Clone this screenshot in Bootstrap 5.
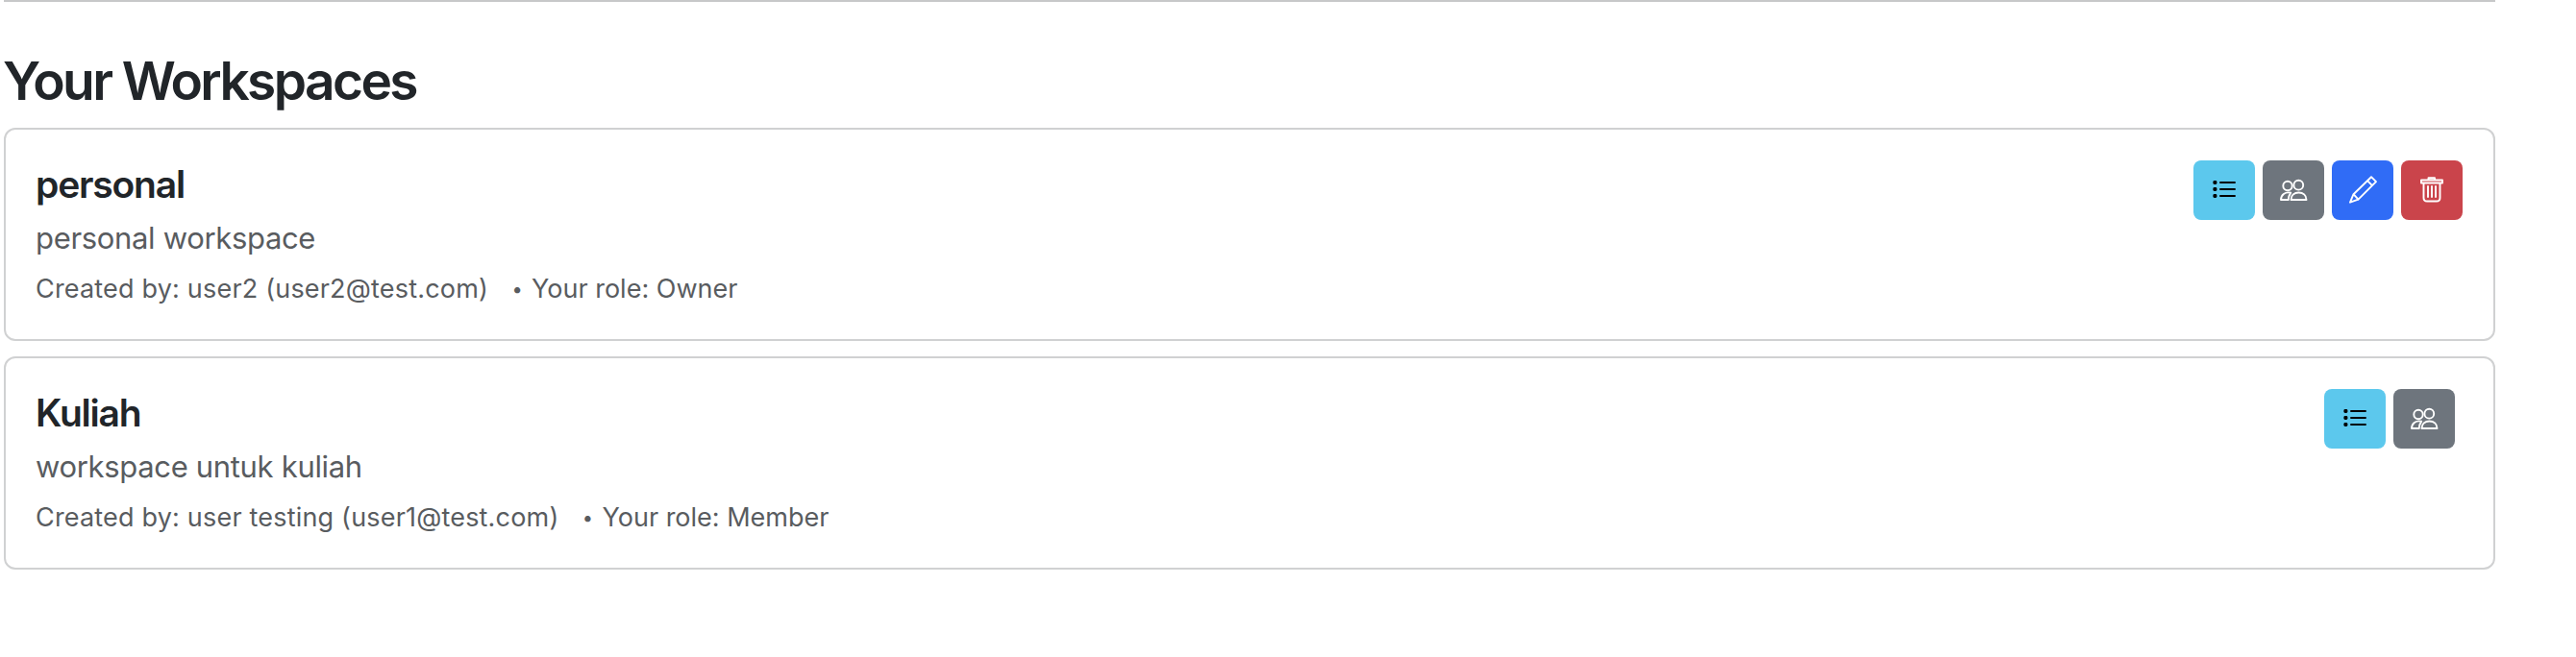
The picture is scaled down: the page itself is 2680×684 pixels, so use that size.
<!DOCTYPE html>
<html lang="en">
<head>
<meta charset="utf-8">
<meta name="viewport" content="width=device-width, initial-scale=1">
<title>Your Workspaces</title>
<link href="https://cdn.jsdelivr.net/npm/bootstrap@5.3.0/dist/css/bootstrap.min.css" rel="stylesheet">
<style>
  body { font-family: Inter, "Liberation Sans", sans-serif; color: #212529; background: #fff; }
  .page { width: 2600px; padding-left: 4px; padding-right: 4px; }
  .rule { border-top: 2px solid #c7c8c9; opacity: 1; margin: 0 0 49px; }
  .page-title { font-size: 55px; line-height: 67px; font-weight: 560; letter-spacing: -2.6px; margin: 0 0 15px -1px; }
  .ws-list { gap: 16px; }
  .ws-card { height: 222px; border: 2px solid #d0d1d2; border-radius: 12px; }
  .ws-card .card-body { padding: 32px; }
  .ws-text { padding-top: 1px; margin-left: -1px; }
  .ws-name { font-size: 39px; line-height: 48px; font-weight: 560; letter-spacing: -1.2px; margin: 0 0 8px; }
  .ws-desc { font-size: 31px; line-height: 48px; letter-spacing: -.33px; margin: 0 0 8px; color: #595c5f; }
  .ws-meta { font-size: 27px; line-height: 42px; color: #595c5f; }
  .ws-by { letter-spacing: .19px; }
  .ws-dot { width: 16px; margin: 0 7px 0 22px; font-size: 20px; text-align: center; }
  .ws-actions { gap: 8px; }
  .ws-actions.shared { margin-right: 8px; }
  .btn-tile { width: 64px; height: 62px; border: 0; border-radius: 8px; padding: 0; }
  .tile-list { background: #5cc8ed; color: #000; }
  .tile-people { background: #6e757d; color: #fff; }
  .tile-edit { background: #306cf6; color: #fff; }
  .tile-delete { background: #ca444b; color: #fff; }
  .btn-tile svg { width: 32px; height: 32px; fill: none; stroke: currentColor; stroke-width: 1.9; stroke-linejoin: round; stroke-linecap: round; }
</style>
</head>
<body>
<svg class="d-none" aria-hidden="true">
  <symbol id="i-list" viewBox="0 0 32 32">
    <g fill="currentColor" stroke="none"><rect x="4.400" y="6" width="4" height="4" rx="1.400"/><rect x="4.400" y="13" width="4" height="4" rx="1.400"/><rect x="4.400" y="20" width="4" height="4" rx="1.400"/></g>
    <path d="M12 8h15M12 15h15M12 22h15"/>
  </symbol>
  <symbol id="i-people" viewBox="0 0 32 32">
    <circle cx="10" cy="11.500" r="4.700"/><circle cx="21.300" cy="10.700" r="4.900"/>
    <path d="M13.200 18.600C7.200 17.400 3 21 3 26h7.800c0-3 1-5.400 2.400-7.400zM13.500 26c0-4.800 3.500-7.500 8-7.500s8 2.700 8 7.500z"/>
  </symbol>
  <symbol id="i-pencil" viewBox="0 0 32 32">
    <path d="M3 28.700 6.500 20.200 25 2.200l5 5-18.500 18.500zM21 6.200l5 5M6.500 20.200l5 5.500"/>
  </symbol>
  <symbol id="i-trash" viewBox="0 0 32 32">
    <path d="M5 5.500h22v3H5zM12.500 5V3.200h6.500V5M7.500 9v15q0 3.500 3.500 3.500h10q3.500 0 3.500-3.500V9M12 12v11M16 12v11M20 12v11"/>
  </symbol>
</svg>
<main class="page">
  <hr class="rule">
  <h2 class="page-title">Your Workspaces</h2>
  <div class="ws-list d-flex flex-column">
    <div class="card ws-card">
      <div class="card-body d-flex justify-content-between align-items-start">
        <div class="ws-text">
          <h5 class="ws-name">personal</h5>
          <p class="ws-desc">personal workspace</p>
          <div class="ws-meta d-flex"><span class="ws-by">Created by: user2 (user2@test.com)</span><span class="ws-dot">•</span><span>Your role: Owner</span></div>
        </div>
        <div class="ws-actions d-flex">
          <button class="btn btn-tile tile-list d-flex align-items-center justify-content-center" aria-label="Tasks"><svg><use href="#i-list"/></svg></button>
          <button class="btn btn-tile tile-people d-flex align-items-center justify-content-center" aria-label="Members"><svg><use href="#i-people"/></svg></button>
          <button class="btn btn-tile tile-edit d-flex align-items-center justify-content-center" aria-label="Edit"><svg><use href="#i-pencil"/></svg></button>
          <button class="btn btn-tile tile-delete d-flex align-items-center justify-content-center" aria-label="Delete"><svg><use href="#i-trash"/></svg></button>
        </div>
      </div>
    </div>
    <div class="card ws-card">
      <div class="card-body d-flex justify-content-between align-items-start">
        <div class="ws-text">
          <h5 class="ws-name">Kuliah</h5>
          <p class="ws-desc">workspace untuk kuliah</p>
          <div class="ws-meta d-flex"><span class="ws-by">Created by: user testing (user1@test.com)</span><span class="ws-dot">•</span><span>Your role: Member</span></div>
        </div>
        <div class="ws-actions shared d-flex">
          <button class="btn btn-tile tile-list d-flex align-items-center justify-content-center" aria-label="Tasks"><svg><use href="#i-list"/></svg></button>
          <button class="btn btn-tile tile-people d-flex align-items-center justify-content-center" aria-label="Members"><svg><use href="#i-people"/></svg></button>
        </div>
      </div>
    </div>
  </div>
</main>
<script src="https://cdn.jsdelivr.net/npm/bootstrap@5.3.0/dist/js/bootstrap.bundle.min.js"></script>
</body>
</html>
